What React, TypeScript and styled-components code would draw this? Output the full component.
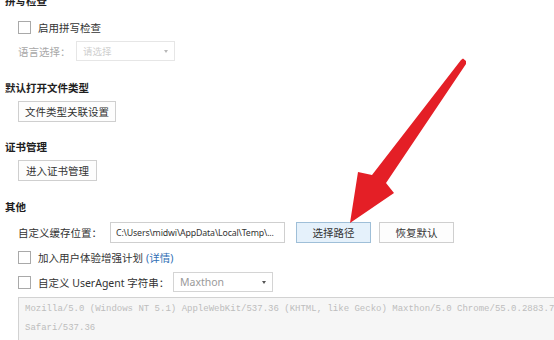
import styled, { createGlobalStyle } from "styled-components";

const GlobalStyle = createGlobalStyle`
    html, body {
        margin: 0;
        padding: 0;
        background: #ffffff;
        overflow: hidden;
    }
    body {
        font-family: "Noto Sans", "Noto Sans CJK SC", sans-serif;
        font-size: 10.5px;
        color: #333333;
    }
`;

const Viewport = styled.div`
    position: relative;
    width: 554px;
    height: 340px;
    overflow: hidden;
`;

const Page = styled.div`
    margin-top: -8px;
    padding-left: 5px;
    display: flex;
    flex-direction: column;
    width: 620px;
`;

const Heading = styled.div<{ $top?: number }>`
    height: 18px;
    line-height: 18px;
    margin-top: ${(p) => p.$top ?? 0}px;
    font-weight: 700;
    color: #1e1e1e;
    font-size: 10.5px;
`;

const Row = styled.div<{ $top: number; $h?: number }>`
    display: flex;
    align-items: center;
    height: ${(p) => p.$h ?? 20}px;
    margin-top: ${(p) => p.$top}px;
    padding-left: 13px;
`;

const Box = styled.span`
    width: 11px;
    height: 11px;
    border: 1px solid #a9a9a9;
    background: #fff;
    margin-right: 7px;
    flex-shrink: 0;
`;

const Label = styled.span<{ $w?: number; $muted?: boolean }>`
    width: ${(p) => (p.$w ? `${p.$w}px` : "auto")};
    flex-shrink: 0;
    color: ${(p) => (p.$muted ? "#a8a8a8" : "#333")};
    white-space: nowrap;
`;

const Link = styled.span`
    color: #2f6fb5;
    margin-left: 3px;
`;

const Select = styled.div<{ $w: number; $disabled?: boolean }>`
    width: ${(p) => p.$w}px;
    height: 20px;
    box-sizing: border-box;
    border: 1px solid ${(p) => (p.$disabled ? "#e6e6e6" : "#d4d4d4")};
    background: #fff;
    display: flex;
    align-items: center;
    padding: 0 6px 0 6px;
    color: ${(p) => (p.$disabled ? "#cfcfcf" : "#9a9a9a")};
    font-size: ${(p) => (p.$disabled ? 9.5 : 10.5)}px;
    &::after {
        content: "";
        margin-left: auto;
        border-left: 2.5px solid transparent;
        border-right: 2.5px solid transparent;
        border-top: 3px solid ${(p) => (p.$disabled ? "#b8b8b8" : "#555")};
    }
`;

const Button = styled.button<{ $w: number; $active?: boolean; $left?: number }>`
    width: ${(p) => p.$w}px;
    height: 21px;
    margin-left: ${(p) => p.$left ?? 0}px;
    box-sizing: border-box;
    border: 1px solid ${(p) => (p.$active ? "#9fbfd8" : "#cfcfcf")};
    background: ${(p) => (p.$active ? "#e5f1fb" : "#fdfdfd")};
    font-family: inherit;
    font-size: 10.5px;
    color: #333;
    padding: 0;
    border-radius: 0;
`;

const PathInput = styled.div`
    width: 175px;
    height: 21px;
    box-sizing: border-box;
    border: 1px solid #cfcfcf;
    display: flex;
    align-items: center;
    padding-left: 5px;
    font-size: 8.8px;
    letter-spacing: -0.15px;
    color: #333;
    white-space: nowrap;
    overflow: hidden;
`;

const AgentBox = styled.div`
    margin: 5px 0 0 13px;
    width: 580px;
    height: 60px;
    box-sizing: border-box;
    border: 1px solid #d2d2d2;
    background: #f6f6f6;
    padding: 2px 6px;
    font-family: "Liberation Mono", monospace;
    font-size: 9px;
    line-height: 19px;
    color: #bdbdbd;
    word-break: normal;
`;

const Arrow = styled.svg`
    position: absolute;
    left: 0;
    top: 0;
    pointer-events: none;
`;

export default function App() {
    return (
        <Viewport>
            <GlobalStyle />
            <Page>
                <Heading>拼写检查</Heading>
                <Row $top={7}>
                    <Box />
                    <Label>启用拼写检查</Label>
                </Row>
                <Row $top={4}>
                    <Label $w={58} $muted>语言选择：</Label>
                    <Select $w={99} $disabled>请选择</Select>
                </Row>

                <Heading $top={18}>默认打开文件类型</Heading>
                <Row $top={4} $h={21}>
                    <Button $w={98}>文件类型关联设置</Button>
                </Row>

                <Heading $top={16}>证书管理</Heading>
                <Row $top={4} $h={21}>
                    <Button $w={79}>进入证书管理</Button>
                </Row>

                <Heading $top={17}>其他</Heading>
                <Row $top={6} $h={21}>
                    <Label $w={92}>自定义缓存位置：</Label>
                    <PathInput>C:\Users\midwi\AppData\Local\Temp\...</PathInput>
                    <Button $w={75} $left={11} $active>选择路径</Button>
                    <Button $w={75} $left={8}>恢复默认</Button>
                </Row>
                <Row $top={4}>
                    <Box />
                    <Label>加入用户体验增强计划</Label>
                    <Link>(详情)</Link>
                </Row>
                <Row $top={5}>
                    <Box />
                    <Label $w={135}>自定义 UserAgent 字符串：</Label>
                    <Select $w={100}>Maxthon</Select>
                </Row>
                <AgentBox>
                    Mozilla/5.0 (Windows NT 5.1) AppleWebKit/537.36 (KHTML, like Gecko) Maxthon/5.0 Chrome/55.0.2883.75 Safari/537.36
                </AgentBox>
            </Page>

            <Arrow width="554" height="340" viewBox="0 0 554 340">
                <polygon
                    points="461,60 463,58.5 466,61 466,64 386,183 394,193 350,223 358,172 372,175"
                    fill="#e41f26"
                />
            </Arrow>
        </Viewport>
    );
}
